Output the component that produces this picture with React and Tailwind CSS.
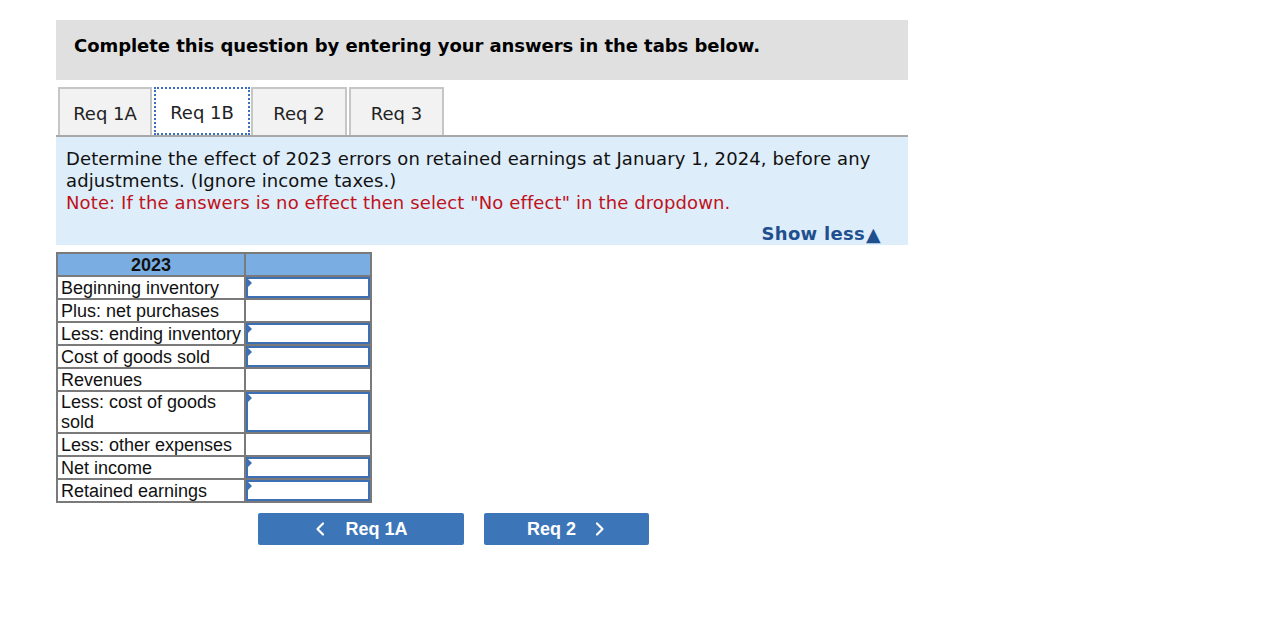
import React from "react";

const rows = [
  { label: "Beginning inventory", input: true },
  { label: "Plus: net purchases", input: false },
  { label: "Less: ending inventory", input: true },
  { label: "Cost of goods sold", input: true },
  { label: "Revenues", input: false },
  { label: "Less: cost of goods sold", input: true, tall: true },
  { label: "Less: other expenses", input: false },
  { label: "Net income", input: true },
  { label: "Retained earnings", input: true },
];

function InputCell({ tall }) {
  return (
    <div className={`relative border-2 border-[#3d6fb5] bg-white ${tall ? "h-[40px]" : "h-[21px]"}`}>
      <div className="absolute left-0 top-0 w-0 h-0 border-t-[4px] border-b-[4px] border-l-[4px] border-t-transparent border-b-transparent border-l-[#3d6fb5]" />
    </div>
  );
}

export default function App() {
  const verdana = { fontFamily: '"DejaVu Sans", Verdana, sans-serif' };
  return (
    <div className="w-[1270px] h-[634px] bg-white">
      <div className="pt-[20px] pl-[56px] w-[908px]">
        <div className="h-[60px] bg-[#e0e0e0] pl-[18px] pt-[15px]">
          <p className="text-[18px] leading-[22px] font-bold text-black tracking-[-0.06px]" style={verdana}>
            Complete this question by entering your answers in the tabs below.
          </p>
        </div>

        <div className="mt-[7px] flex items-end pl-[2px] border-b-2 border-[#a8a8a8]" style={verdana}>
          <div className="w-[94px] h-[48px] pt-[2px] bg-[#f2f2f2] border-2 border-b-0 border-[#c6c6c6] flex items-center justify-center text-[18px] text-[#222]">
            Req 1A
          </div>
          <div className="ml-[2px] w-[96px] h-[48px] pt-[2px] bg-white border-2 border-dotted border-[#3a6fbf] flex items-center justify-center text-[18px] text-[#222]">
            Req 1B
          </div>
          <div className="ml-[1px] w-[96px] h-[48px] pt-[2px] bg-[#f2f2f2] border-2 border-b-0 border-[#c6c6c6] flex items-center justify-center text-[18px] text-[#222]">
            Req 2
          </div>
          <div className="ml-[2px] w-[95px] h-[48px] pt-[2px] bg-[#f2f2f2] border-2 border-b-0 border-[#c6c6c6] flex items-center justify-center text-[18px] text-[#222]">
            Req 3
          </div>
        </div>

        <div className="bg-[#ddedf9] pt-[11px] pl-[10px] pr-[27px] h-[108px] tracking-[0.12px]" style={verdana}>
          <p className="text-[18px] leading-[22px] text-[#111]">
            Determine the effect of 2023 errors on retained earnings at January 1, 2024, before any adjustments. (Ignore income taxes.)
          </p>
          <p className="text-[18px] leading-[22px] text-[#c0121c]">
            Note: If the answers is no effect then select "No effect" in the dropdown.
          </p>
          <div className="flex justify-end mt-[9px]">
            <span className="text-[18px] leading-[22px] font-bold text-[#1f4f8f] tracking-[0.3px] flex items-center">
              Show less<span className="text-[19px] leading-[22px] ml-[1px]">▲</span>
            </span>
          </div>
        </div>

        <div className="mt-[7px]">
          <table
            className="border-collapse border-2 border-[#7a7a7a]"
            style={{ fontFamily: '"Liberation Sans", Arial, sans-serif' }}
          >
            <thead>
              <tr className="bg-[#7aaee2]">
                <th className="border-2 border-[#7a7a7a] w-[188px] h-[23px] p-0 text-[18px] leading-[20px] font-bold text-[#111] text-center">
                  2023
                </th>
                <th className="border-2 border-[#7a7a7a] w-[126px] h-[23px] p-0" />
              </tr>
            </thead>
            <tbody>
              {rows.map((r) => (
                <tr key={r.label}>
                  <td className={`border-2 border-[#7a7a7a] p-0 pl-[3px] text-[18px] leading-[20px] text-[#111] align-middle ${r.tall ? "h-[42px]" : "h-[23px]"}`}>
                    {r.tall ? (
                      <span className="block w-[170px]">{r.label}</span>
                    ) : (
                      <span className="whitespace-nowrap">{r.label}</span>
                    )}
                  </td>
                  <td className="border-2 border-[#7a7a7a] p-0 align-middle">
                    {r.input ? <InputCell tall={r.tall} /> : null}
                  </td>
                </tr>
              ))}
            </tbody>
          </table>
        </div>

        <div className="mt-[10px] ml-[202px] flex gap-[20px]" style={{ fontFamily: '"Liberation Sans", Arial, sans-serif' }}>
          <button className="w-[206px] h-[32px] bg-[#3d76b8] rounded-[2px] text-white text-[18px] font-bold flex items-center justify-center gap-[19px]">
            <svg width="12" height="16" viewBox="0 0 12 16" fill="none">
              <path d="M9 2.5 L3.5 8 L9 13.5" stroke="white" strokeWidth="2.2" strokeLinecap="round" strokeLinejoin="round" />
            </svg>
            <span>Req 1A</span>
          </button>
          <button className="w-[165px] h-[32px] bg-[#3d76b8] rounded-[2px] text-white text-[18px] font-bold flex items-center justify-center gap-[18px]">
            <span>Req 2</span>
            <svg width="12" height="16" viewBox="0 0 12 16" fill="none">
              <path d="M3 2.5 L8.5 8 L3 13.5" stroke="white" strokeWidth="2.2" strokeLinecap="round" strokeLinejoin="round" />
            </svg>
          </button>
        </div>
      </div>
    </div>
  );
}
